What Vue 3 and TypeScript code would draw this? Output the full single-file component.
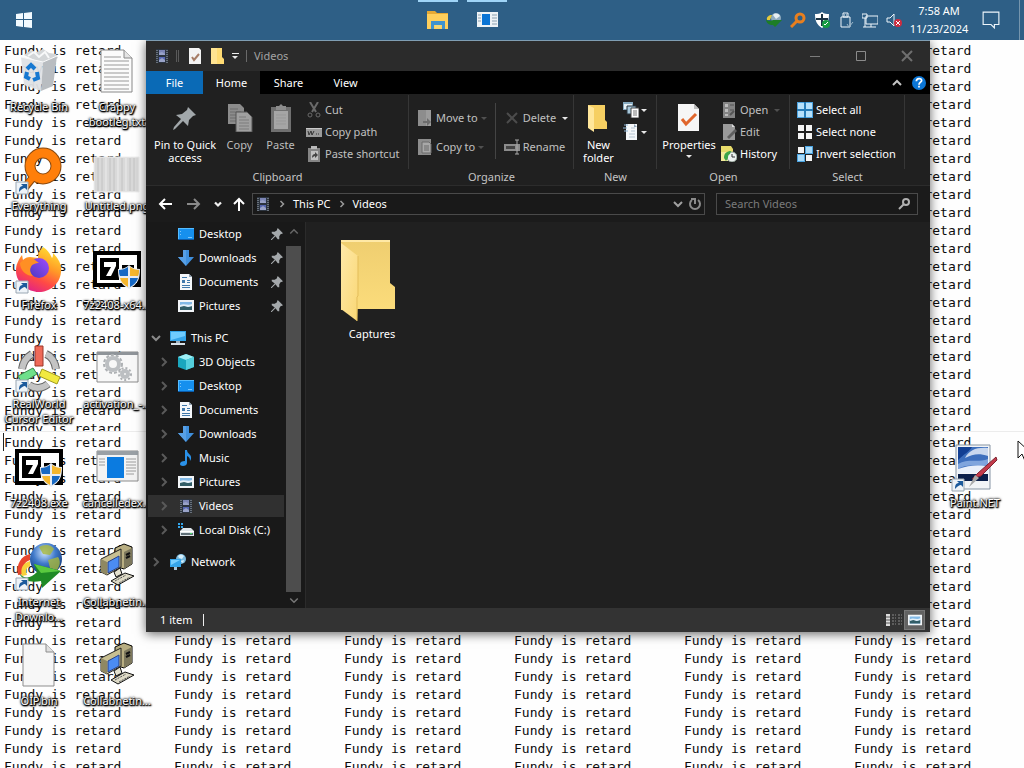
<script setup lang="ts">
interface Shortcut { label: string; icon: string; col: number; row: number }
interface TreeItem { label: string; icon: string; level: number; pinned?: boolean; open?: boolean; selected?: boolean; gap?: boolean }
interface Command { label: string; icon: string; off?: boolean; arrow?: boolean }

const phrase = 'Fundy is retard'
const columns = 6
const tiles = [22, 19]

const arrowBadge = '<path d="M1 35h12v12H1z" fill="#eef3f8" stroke="#9aa7b3"/><path d="M4 45c0-4 1-6 4-6l-2-2h6v6l-2-2c-2 0-3 1-6 4z" fill="#1c5a9c"/>'
const shield = '<path d="M36 19c3 3 7 4 11 4 0 10-2 15-11 20-9-5-11-10-11-20 4 0 8-1 11-4z" fill="#e9edf2"/><path d="M35 21v9h-8c-1-2-1-4-1-6 3 0 6-1 9-3z" fill="#1769c4"/><path d="M37 21c3 2 6 3 9 3 0 2 0 4-1 6h-8z" fill="#f5b62d"/><path d="M27 32h8v9c-4-2-7-5-8-9z" fill="#f5b62d"/><path d="M45 32h-8v9c4-2 7-5 8-9z" fill="#1769c4"/>'
const sevenZip = '<path d="M0 5h48v36H0z" fill="#000"/><path d="M4 9h40v28H4z" fill="#fff"/><path d="M7 12h19v22H7z" fill="#000"/><path d="M11 16h12v4l-5 10h-5l5-9h-7z" fill="#fff"/><path d="M29 19h12v4l-6 7h6v4H29v-4l6-7h-6z" fill="#000"/>'
const oldPc = '<path d="M22 5l9-4 8 3v17l-8 5-9-3z" fill="#b8ae82" stroke="#000"/><path d="M31 9l8-4v16l-8 5z" fill="#7d785d"/><path d="M33 12l4-2m-4 5l4-2" stroke="#111" stroke-width="2"/><path d="M8 16L28 6v18L14 32l-6-3z" fill="#c8bf91" stroke="#222"/><path d="M8 16l6 3v13l-6-3z" fill="#8f8862"/><path d="M15 19l11-6v11l-11 6z" fill="#4b8cf4" stroke="#27408a"/><path d="M21 29l6-4 2 6-6 3z" fill="#e5e1cf" stroke="#111"/><path d="M18 38l14-8 9 3-16 9z" fill="#dedac6" stroke="#111"/><path d="M22 38l11-6m-7 8l11-6" stroke="#555" stroke-dasharray="2 1"/>'

const big: Record<string, string> = {
  recycle: '<path d="M9 7l7-5 4 3 8-4 6 4 7 1 2 4-15 6z" fill="#d3d6d8"/><path d="M13 8l6-4 5 5 6-5 4 6" fill="none" stroke="#f7f8f9" stroke-width="2"/><path d="M6 9l22 5-2 29L9 37z" fill="#dfe2e5" fill-opacity=".95"/><path d="M28 14l14-6-4 30-12 5z" fill="#b9bdc1"/><path d="M6 9l22 5 14-6" fill="none" stroke="#f8f9fa"/><g fill="none" stroke="#1678d1" stroke-width="4"><path d="M12 21l4-4 4 4"/><path d="M22 24l1 6-5 2"/><path d="M15 31l-4-2 1-5"/></g>',
  text: '<path d="M8 2h23l8 8v34H8z" fill="#fbfbfb" stroke="#888"/><path d="M31 2v8h8" fill="#e4e4e4" stroke="#888"/><path d="M11 9h17M11 13h25M11 17h25M11 21h25M11 25h25M11 29h25M11 33h25M11 37h25M11 41h25" stroke="#999"/>',
  everything: '<circle cx="28" cy="19" r="13" fill="none" stroke="#8a4a10" stroke-width="11"/><path d="M20 28L8 43" stroke="#8a4a10" stroke-width="8"/><circle cx="28" cy="19" r="13" fill="none" stroke="#ff7f0a" stroke-width="9"/><path d="M21 27L9 41" stroke="#ff7f0a" stroke-width="6"/>' + arrowBadge,
  thumb: '<path d="M1 10h45v35H1z" fill="#d9d9d9" stroke="#eee"/><path d="M5 11v33M9 11v33M17 11v33M21 11v33M29 11v33M37 11v33M41 11v33" stroke="#c2c2c2"/><path d="M13 11v33M25 11v33M33 11v33" stroke="#ececec"/>',
  firefox: '<defs><linearGradient id="ffx" x1=".8" y1="0" x2=".3" y2="1"><stop offset="0" stop-color="#ffe535"/><stop offset=".4" stop-color="#ff9a26"/><stop offset=".7" stop-color="#ff4a45"/><stop offset="1" stop-color="#e0218a"/></linearGradient><linearGradient id="ffp" x1="1" y1="0" x2="0" y2="1"><stop offset="0" stop-color="#a04bff"/><stop offset="1" stop-color="#4a38c0"/></linearGradient></defs><path d="M28 1c5 3 7 7 9 11 1-1 1-3 1-5 6 6 9 12 8 19-1 12-11 20-22 20S1 37 1 25c0-7 3-12 6-16l1 5c2-2 4-3 7-3 3 0 5 1 8 1 0-5 2-8 5-11z" fill="url(#ffx)"/><circle cx="24" cy="22" r="10" fill="url(#ffp)"/><path d="M5 17c3-4 10-6 15-3l4 3c-3 0-7 1-8 4-2 3 0 7 2 9-7 0-13-6-13-13z" fill="#ff8f24"/>' + arrowBadge,
  seven: sevenZip + shield,
  realworld: '<g fill="none" stroke-width="8" stroke-linecap="butt"><path d="M7 24c1-7 5-12 10-15" stroke="#666"/><path d="M31 9c5 2 9 8 10 15" stroke="#666"/><path d="M14 40c6 4 13 4 19-1" stroke="#666"/><path d="M7 24c1-7 5-12 10-15M31 9c5 2 9 8 10 15M14 40c6 4 13 4 19-1" stroke="#c4c4c4" stroke-width="6"/></g><path d="M20 1h8v20h-8z" fill="#ee6a58" stroke="#9c3628"/><path d="M3 31l15-8 4 6-15 9z" fill="#6fe08a" stroke="#3b8c4e"/><path d="M27 24l18 8-3 7-18-8z" fill="#f1e93f" stroke="#a19b1d"/>' + arrowBadge,
  gears: '<path d="M4 7h41v30H4z" fill="#f8f8f8" stroke="#8b8b8b"/><path d="M4 7h41v3H4z" fill="#8f9499"/><circle cx="20" cy="19" r="6" fill="none" stroke="#bcbfc2" stroke-width="4"/><circle cx="20" cy="19" r="9" fill="none" stroke="#aeb1b4" stroke-width="2" stroke-dasharray="3 2"/><circle cx="32" cy="29" r="3" fill="none" stroke="#bcbfc2" stroke-width="4"/><circle cx="32" cy="29" r="6" fill="none" stroke="#aeb1b4" stroke-width="2" stroke-dasharray="2 2"/>',
  app: '<path d="M4 7h41v30H4z" fill="#f3f3f3" stroke="#8b8b8b"/><path d="M4 7h41v4H4z" fill="#9aa0a5"/><path d="M14 13h17v21H14z" fill="#0b7be0"/><path d="M6 15h6M6 18h6M6 21h6M33 15h10M33 18h10M33 21h10M33 24h10M33 27h10M33 30h8" stroke="#9c9c9c"/>',
  idm: '<defs><radialGradient id="globe" cx=".45" cy=".3" r=".7"><stop offset="0" stop-color="#cfe4ff"/><stop offset=".5" stop-color="#3f79c9"/><stop offset="1" stop-color="#123a7c"/></radialGradient></defs><circle cx="31" cy="16" r="16" fill="url(#globe)"/><path d="M24 4c5-3 12-3 15 2l-4 6-7-1zM33 17l10-3c3 4 2 9-1 13l-7-2z" fill="#a7b83b" fill-opacity=".8"/><path d="M3 32C1 21 6 13 15 11v6c-6 2-8 7-5 14z" fill="#e8462e"/><path d="M7 33c-2-8 1-13 8-15v5c-3 1-5 4-3 9z" fill="#f7d23b"/><path d="M4 30c6 7 12 5 18-1l-3-8 27 7-19 17-1-7C16 40 8 38 4 30z" fill="#1f8a25"/><path d="M19 21l27 7-20 2z" fill="#5ac93f"/>' + arrowBadge,
  pc: oldPc,
  blank: '<path d="M8 2h23l8 8v34H8z" fill="#f7f7f7" stroke="#8d8d8d"/><path d="M31 2v8h8" fill="#e0e0e0" stroke="#8d8d8d"/>',
  paint: '<path d="M5 1h34v44H5z" fill="#f2f4f7" stroke="#8694a3"/><path d="M7 3h30v26H7z" fill="#3d6fbd"/><path d="M7 3h14c-3 5-8 7-14 13z" fill="#123f93"/><path d="M14 14c4-8 12-11 23-10v8c-9-3-15-2-23 2z" fill="#c8d7ee"/><path d="M7 20c10-6 20-1 30-5v6c-10 3-19-3-30 4z" fill="#7fa5dd"/><path d="M7 25c10-4 20-4 30-3v7H7z" fill="#e9f0fa"/><path d="M7 30h30v7H7z" fill="#0b1f4a"/><path d="M45 13l-18 16-6 6 9-3L46 16z" fill="#c23a4a" stroke="#7d2430"/><path d="M24 31l4 3-10 9z" fill="#a9a9a9"/>' + arrowBadge,
}

const film = '<path d="M2 1h12v14H2z" fill="#2c343f"/><path d="M5 2h6v5H5z" fill="#7d86b6"/><path d="M5 9h6v5H5z" fill="#5566b0"/><path d="M5 5l3-1 3 2v1H5zM5 12l3-2 3 2v2H5z" fill="#9aa3c8"/><path d="M3 2v13M13 2v13" stroke="#a5adb6" stroke-dasharray="1 1"/>'
const desktopIcon = '<path d="M0 2h16v12H0z" fill="#1690ee"/><path d="M0 2h16v1H0zM0 2h1v12H0z" fill="#55bcff"/><path d="M2 5h1v1H2zM2 8h1v1H2zM10 11h4v1h-4z" fill="#7cc6fa"/><path d="M0 13h16v1H0z" fill="#0b5cab"/>'

const small: Record<string, string> = {
  film,
  desktop: desktopIcon,
  downloads: '<path d="M5 0h6v7h5l-8 9-8-9h5z" fill="#3f8fdc"/><path d="M5 0h3v16L0 7h5z" fill="#579fe5"/>',
  documents: '<path d="M2 0h9l3 3v13H2z" fill="#f4f7fa"/><path d="M11 0v3h3z" fill="#8fa3b6"/><path d="M4 3h5v1H4zM4 6h3v3H4zM9 6h3v1H9zM9 8h3v1H9zM4 11h8v1H4zM4 13h8v1H4z" fill="#3f78ab"/>',
  pictures: '<path d="M0 2h16v12H0z" fill="#f2f5f8"/><path d="M2 4h12v8H2z" fill="#82b9e6"/><path d="M2 8l4-1 4 2 4-1v4H2z" fill="#315d67"/><path d="M2 7c4-2 8 1 12-1v2l-4 1-4-1-4 1z" fill="#e5f0f8"/>',
  pc: '<path d="M0 1h16v10H0z" fill="#35a5ea"/><path d="M1 2h14v4L1 10z" fill="#70ccff"/><path d="M6 11h4v2H6z" fill="#9fb2c0"/><path d="M1 13h14v2H1z" fill="#d8e1e8"/>',
  cube: '<path d="M8 0l8 3v10l-8 3-8-3V3z" fill="#1aa6bd"/><path d="M8 0l8 3-8 3-8-3z" fill="#9eeff5"/><path d="M8 6l8-3v10l-8 3z" fill="#54cfdd"/>',
  music: '<path d="M7 0h2c0 4 5 4 4 9l-1 2c0-3-1-4-3-5v7c0 2-2 3-4 3s-3-1-3-2c0-2 2-3 5-3z" fill="#2a91e8"/>',
  disk: '<path d="M0 1h2v2H0zM3 1h2v2H3zM0 4h2v2H0zM3 4h2v2H3z" fill="#35a5ea"/><path d="M2 9l3-3h8l3 3v5H2z" fill="#dfe6ea"/><path d="M2 9h14v1H2z" fill="#fff"/><path d="M3 11h12v2H3z" fill="#607078"/><path d="M12 11h2v1h-2z" fill="#49e06b"/>',
  network: '<circle cx="11" cy="5" r="5" fill="#79b9dc"/><path d="M8 2c2-2 4-2 6 0l-2 3-3-1zM10 7l4-1-1 3z" fill="#d5eefb"/><path d="M0 5h11v8H0z" fill="#35a5ea"/><path d="M1 6h9L1 11z" fill="#78cfff"/><path d="M4 13h3v3H4z" fill="#a8c5d6"/>',
  pin: '<path d="M9 0l7 7-2 1-1 0-2 3 0 4-2 0-3-4-5 5-1 0 0-1 5-5-4-3 0-2 4 0 3-2 0-1z" fill="#a4a8ab"/>',
  cut: '<path d="M4 0l6 10M12 0L6 10" stroke="#6a6a6a" stroke-width="2" fill="none"/><circle cx="4" cy="13" r="2" fill="none" stroke="#6a6a6a"/><circle cx="12" cy="13" r="2" fill="none" stroke="#6a6a6a"/>',
  path: '<path d="M0 4h16v9H0z" fill="#9b9b9b"/><path d="M2 7l1 4 2-4 1 4 2-4M10 10h1M12 10h1" stroke="#333" fill="none"/><path d="M0 4h16v1H0z" fill="#cacaca"/>',
  pasteShortcut: '<path d="M2 2h12v14H2z" fill="#858585"/><path d="M5 0h6v3H5z" fill="#b9b9b9"/><path d="M5 5h7v9H5z" fill="#c0c0c0"/><path d="M6 12c0-3 1-4 3-4V6l3 3-3 3v-2c-1 0-2 1-3 2z" fill="#444"/>',
  move: '<path d="M1 0h13v16H1z" fill="#8d8d8d"/><path d="M9 0h5v16H9z" fill="#9c9c9c"/><path d="M6 11h4V8l4 4-4 4v-3H6z" fill="#6c6c6c"/>',
  copyTo: '<path d="M1 0h13v16H1z" fill="#8d8d8d"/><path d="M5 3h7l2 2v9H5z" fill="#a8a8a8" stroke="#6a6a6a"/><path d="M7 7h5M7 9h5M7 11h5" stroke="#6a6a6a"/>',
  delete: '<path d="M3 3l10 10M13 3L3 13" stroke="#4c4c4c" stroke-width="2"/>',
  rename: '<path d="M0 5h16v7H0z" fill="#8c8c8c"/><path d="M2 7h9v3H2z" fill="#444"/><path d="M11 1h4M13 1v14M11 15h4" stroke="#aaa"/>',
  newItem: '<path d="M0 0h10v8H0z" fill="#86a9bf"/><path d="M1 2h8v5H1z" fill="#e6f1f7"/><path d="M4 4h9v8H4z" fill="#a7c7da" stroke="#26333c"/><path d="M8 6h8v10H8z" fill="#fff" stroke="#444"/><path d="M10 9h4M10 11h4M10 13h4" stroke="#777"/>',
  easy: '<path d="M3 0h11v16H3z" fill="#f4f7f9"/><path d="M8 4h4M8 7h4M6 10h6M6 13h6" stroke="#b4c3d0"/><path d="M0 4h4M1 7h4M1 1h4" stroke="#8fb6d6"/><path d="M11 0l3 3h-3z" fill="#8fa3b6"/>',
  open: '<path d="M2 0h12v16H2z" fill="#848484"/><path d="M4 2h3v3H4zM4 7h3v3H4zM4 12h3v2H4z" fill="#bcbcbc"/><path d="M9 3h4M9 8h4" stroke="#555"/><path d="M9 13l4-4" stroke="#555" stroke-width="2"/>',
  edit: '<path d="M2 0h9l3 3v13H2z" fill="#999"/><path d="M11 0v3h3z" fill="#ddd"/><path d="M6 13l8-8 2 2-8 8z" fill="#606060"/>',
  history: '<path d="M0 0h10l2 3v10H0z" fill="#e8dc6b"/><path d="M0 6h7v9H0z" fill="#f3eb9a"/><circle cx="11" cy="11" r="5" fill="#eef2f0" stroke="#8a9a8f"/><path d="M11 8v3h3" stroke="#333" fill="none"/><path d="M3 12c0-5 3-7 7-7l-1 3c-2 1-2 2-2 4l-2 3z" fill="#3da548"/>',
  all: '<path d="M0 0h16v16H0z" fill="#4ba3e0"/><path d="M1 1h6v6H1zM9 1h6v6H9zM1 9h6v6H1zM9 9h6v6H9z" fill="#b5e0fb"/><path d="M7 0h2v16H7zM0 7h16v2H0z" fill="#267bb7"/>',
  none: '<path d="M1 1h6v6H1zM9 1h6v6H9zM1 9h6v6H1zM9 9h6v6H9z" fill="#f5f5f5"/>',
  invert: '<path d="M8 0h8v8H8zM0 8h8v8H0z" fill="#4ba3e0"/><path d="M9 1h6v6H9zM1 9h6v6H1z" fill="#a9dbfa"/><path d="M1 1h6v6H1zM9 9h6v6H9z" fill="#f5f5f5"/>',
  check: '<path d="M2 0h10l2 2v14H2z" fill="#f3f3f3"/><path d="M5 9l2 3 5-6" stroke="#a67c66" stroke-width="2" fill="none"/>',
  folder: '<path d="M2 0h11v9l2 2v5H2z" fill="#ffdb73"/><path d="M2 0h6v16H2z" fill="#ffe391"/>',
  search: '<circle cx="10" cy="6" r="3" fill="none" stroke="#b0b0b0" stroke-width="2"/><path d="M8 8l-5 5" stroke="#b0b0b0" stroke-width="2"/>',
  refresh: '<path d="M5 4a5 5 0 1 0 6 0" fill="none" stroke="#8a8a8a" stroke-width="2"/><path d="M4 3h4v5" fill="none" stroke="#8a8a8a" stroke-width="2"/>',
  back: '<path d="M15 8H3M8 3L3 8l5 5" fill="none" stroke="#fff" stroke-width="2"/>',
  forward: '<path d="M1 8h12M8 3l5 5-5 5" fill="none" stroke="#8a8a8a" stroke-width="2"/>',
  up: '<path d="M8 15V3M3 8l5-5 5 5" fill="none" stroke="#fff" stroke-width="2"/>',
  recent: '<path d="M4 6l4 4 4-4" fill="none" stroke="#f0f0f0" stroke-width="3"/>',
  down: '<path d="M4 6l4 4 4-4" fill="none" stroke="#a0a0a0" stroke-width="2"/>',
  chevUp: '<path d="M4 10l4-4 4 4" fill="none" stroke="#c4c4c4" stroke-width="2"/>',
  right: '<path d="M6 4l4 4-4 4" fill="none" stroke="#999" stroke-width="2"/>',
  min: '<path d="M3 8h10" transform="translate(0 .5)" stroke="#7b7b7b"/>',
  max: '<path d="M3 3h9v9H3z" transform="translate(.5 .5)" fill="none" stroke="#8b8b8b"/>',
  close: '<path d="M3 3l10 10M13 3L3 13" stroke="#6f6f6f" stroke-width="2"/>',
  help: '<circle cx="8" cy="8" r="8" fill="#0b76d6"/><path d="M5 6c0-4 6-4 6-1 0 2-3 2-3 5M8 11v2" stroke="#fff" stroke-width="2" fill="none"/>',
  start: '<path d="M0 2l7-1v6H0zM8 1l8-1v7H8zM0 8h7v7l-7-1zM8 8h8v8l-8-1z" fill="#f2faff"/>',
  idm: '<circle cx="10" cy="6" r="5" fill="#8fabbe"/><path d="M7 3c2-2 5-2 7 1l-4 3z" fill="#e6eef2"/><path d="M1 8c-1-3 2-5 5-5L4 8z" fill="#e4c93c"/><path d="M0 7c2 3 5 2 7 1l9 0-7 7-2-2C3 13 0 11 0 7z" fill="#1d7d26"/>',
  every: '<circle cx="10" cy="6" r="4" fill="none" stroke="#e87f1f" stroke-width="3"/><path d="M7 9l-6 6" stroke="#e87f1f" stroke-width="3"/>',
  defender: '<path d="M8 0c2 2 5 2 7 2 0 7-2 11-7 14C3 13 1 9 1 2c2 0 5 0 7-2z" fill="#fff"/><path d="M8 2v12M2 7h12" stroke="#1c3445" stroke-width="2"/><circle cx="12" cy="12" r="4" fill="#169b43"/><path d="M10 12l1 1 3-3" stroke="#fff" fill="none"/>',
  usb: '<path d="M5 1h5v4H5zM3 5h9v10H3z" fill="none" stroke="#eef6fb"/><path d="M6 3h1M8 3h1" stroke="#eef6fb"/><path d="M9 12l2 3 4-5" stroke="#9eb8c9" fill="none"/>',
  lan: '<path d="M4 4h12v8H4zM0 2h5v4H0zM3 6v9M1 15h13M9 12v3" fill="none" stroke="#eef6fb"/>',
  mute: '<path d="M1 6h3l4-4v12l-4-4H1z" fill="none" stroke="#eef6fb"/><circle cx="12" cy="11" r="4" fill="#cf2d40"/><path d="M10 9l4 4M14 9l-4 4" stroke="#fff"/>',
  note: '<path d="M1 1h14v11h-4v3l-3-3H1z" fill="none" stroke="#eef6fb"/>',
  details: '<path d="M0 2h4v12H0z" fill="#ddd"/><path d="M0 5h4M0 8h4M0 11h4" stroke="#555"/><path d="M6 3h4M12 3h4M6 6h4M12 6h4M6 9h4M12 9h4M6 12h4M12 12h4" stroke="#888" stroke-dasharray="2 1"/>',
}

const shortcuts: Shortcut[] = [
  { label: 'Recycle Bin', icon: 'recycle', col: 1, row: 1 },
  { label: 'Everything', icon: 'everything', col: 1, row: 2 },
  { label: 'Firefox', icon: 'firefox', col: 1, row: 3 },
  { label: 'RealWorld Cursor Editor', icon: 'realworld', col: 1, row: 4 },
  { label: '7z2408.exe', icon: 'seven', col: 1, row: 5 },
  { label: 'Internet Downlo...', icon: 'idm', col: 1, row: 6 },
  { label: 'OIP.bin', icon: 'blank', col: 1, row: 7 },
  { label: 'Crappy bootleg.txt', icon: 'text', col: 2, row: 1 },
  { label: 'Untitled.png', icon: 'thumb', col: 2, row: 2 },
  { label: '7z2408-x64...', icon: 'seven', col: 2, row: 3 },
  { label: 'activation_-...', icon: 'gears', col: 2, row: 4 },
  { label: 'cancelledex...', icon: 'app', col: 2, row: 5 },
  { label: 'Collabnetin...', icon: 'pc', col: 2, row: 6 },
  { label: 'Collabnetin...', icon: 'pc', col: 2, row: 7 },
  { label: 'Paint.NET', icon: 'paint', col: 13, row: 5 },
]

const tree: TreeItem[] = [
  { label: 'Desktop', icon: 'desktop', level: 1, pinned: true },
  { label: 'Downloads', icon: 'downloads', level: 1, pinned: true },
  { label: 'Documents', icon: 'documents', level: 1, pinned: true },
  { label: 'Pictures', icon: 'pictures', level: 1, pinned: true },
  { label: 'This PC', icon: 'pc', level: 0, open: true, gap: true },
  { label: '3D Objects', icon: 'cube', level: 1 },
  { label: 'Desktop', icon: 'desktop', level: 1 },
  { label: 'Documents', icon: 'documents', level: 1 },
  { label: 'Downloads', icon: 'downloads', level: 1 },
  { label: 'Music', icon: 'music', level: 1 },
  { label: 'Pictures', icon: 'pictures', level: 1 },
  { label: 'Videos', icon: 'film', level: 1, selected: true },
  { label: 'Local Disk (C:)', icon: 'disk', level: 1 },
  { label: 'Network', icon: 'network', level: 0, gap: true },
]

const clipboard: Command[] = [
  { label: 'Cut', icon: 'cut', off: true },
  { label: 'Copy path', icon: 'path', off: true },
  { label: 'Paste shortcut', icon: 'pasteShortcut', off: true },
]
const organizeLeft: Command[] = [
  { label: 'Move to', icon: 'move', off: true, arrow: true },
  { label: 'Copy to', icon: 'copyTo', off: true, arrow: true },
]
const organizeRight: Command[] = [
  { label: 'Delete', icon: 'delete', off: true, arrow: true },
  { label: 'Rename', icon: 'rename', off: true },
]
const opening: Command[] = [
  { label: 'Open', icon: 'open', off: true, arrow: true },
  { label: 'Edit', icon: 'edit', off: true },
  { label: 'History', icon: 'history' },
]
const selecting: Command[] = [
  { label: 'Select all', icon: 'all' },
  { label: 'Select none', icon: 'none' },
  { label: 'Invert selection', icon: 'invert' },
]
const tray = ['idm', 'every', 'defender', 'usb', 'lan', 'mute']
</script>

<template>
  <div class="screen">
    <header class="taskbar">
      <button class="start" aria-label="Start"><svg class="i16" viewBox="0 0 16 16" v-html="small.start" /></button>
      <div class="grow-left"></div>
      <div class="tasks">
        <button class="task" aria-label="File Explorer">
          <svg class="i24" viewBox="0 0 24 24">
            <path d="M1 2h8l2 2h11v16H1z" fill="#e6a935" /><path d="M1 5h21v15H1z" fill="#ffcf5c" />
            <path d="M5 12h14v8h-3v-4H8v4H5z" fill="#3f93cf" /><path d="M9 16h6v3H9z" fill="#f3d877" />
          </svg>
        </button>
        <button class="task" aria-label="Application">
          <svg class="i24" viewBox="0 0 24 24">
            <path d="M2 3h21v15H2z" fill="#eef3f6" /><path d="M7 5h8v11H7z" fill="#0a74d4" />
            <path d="M3 6h3M3 9h3M3 12h3M17 6h5M17 9h5M17 12h5M17 15h5" stroke="#8ba0b0" />
          </svg>
        </button>
      </div>
      <div class="grow-right"></div>
      <button v-for="t in tray" :key="t" class="tray" :aria-label="t"><svg class="i16" viewBox="0 0 16 16" v-html="small[t]" /></button>
      <button class="clock"><span>7:58 AM</span><span>11/23/2024</span></button>
      <button class="note" aria-label="Notifications"><svg class="i18" viewBox="0 0 16 16" v-html="small.note" /></button>
      <button class="peek" aria-label="Show desktop"></button>
    </header>

    <main class="desktop">
      <div class="wallpaper" aria-hidden="true">
        <div v-for="(rows, t) in tiles" :key="t" class="tile">
          <template v-for="r in rows" :key="r">
            <span v-for="c in columns" :key="c">{{ phrase }}</span>
          </template>
        </div>
        <i class="caret"></i>
      </div>

      <div class="shortcuts">
        <button v-for="(s, i) in shortcuts" :key="i" class="shortcut" :class="['c' + s.col, 'r' + s.row]">
          <svg class="i48" viewBox="0 0 48 48" v-html="big[s.icon]" />
          <span>{{ s.label }}</span>
        </button>
      </div>

      <section class="window" aria-label="Videos">
        <div class="titlebar">
          <svg class="i16" viewBox="0 0 16 16" v-html="small.film" />
          <i class="bar double"></i>
          <button aria-label="Properties"><svg class="i16" viewBox="0 0 16 16" v-html="small.check" /></button>
          <button aria-label="New folder"><svg class="i16" viewBox="0 0 16 16" v-html="small.folder" /></button>
          <button class="quick" aria-label="Customize"><i class="dash"></i><i class="tri"></i></button>
          <i class="bar"></i>
          <h1>Videos</h1>
          <button class="wbtn" aria-label="Minimize"><svg class="i16" viewBox="0 0 16 16" v-html="small.min" /></button>
          <button class="wbtn" aria-label="Maximize"><svg class="i16" viewBox="0 0 16 16" v-html="small.max" /></button>
          <button class="wbtn" aria-label="Close"><svg class="i16" viewBox="0 0 16 16" v-html="small.close" /></button>
        </div>

        <div class="tabs">
          <button class="file">File</button>
          <button class="active">Home</button>
          <button>Share</button>
          <button>View</button>
          <button class="fold" aria-label="Collapse ribbon"><svg class="i16" viewBox="0 0 16 16" v-html="small.chevUp" /></button>
          <button class="help" aria-label="Help"><svg class="i14" viewBox="0 0 16 16" v-html="small.help" /></button>
        </div>

        <div class="ribbon">
          <div class="group clip">
            <div class="body">
              <button class="large pinbtn">
                <svg class="i28" viewBox="0 0 28 28"><path d="M17 3l8 8-3 1-4 4-1 6-5-5-8 8-2 1 1-3 7-8-5-4 6-1 5-4z" fill="#a2a8ab" /></svg>
                <span>Pin to Quick<br>access</span>
              </button>
              <button class="large copybtn off">
                <svg class="i28" viewBox="0 0 28 28"><path d="M2 0h12l4 4v16H2z" fill="#8c8c8c" /><path d="M4 5h8M4 8h11M4 11h6M4 14h6M4 17h6" stroke="#6d6d6d" /><path d="M10 8h11l5 5v15H10z" fill="#a0a0a0" stroke="#555" /><path d="M13 13h7M13 16h10M13 19h10M13 22h10M13 25h10" stroke="#7d7d7d" /></svg>
                <span>Copy</span>
              </button>
              <button class="large pastebtn off">
                <svg class="i28" viewBox="0 0 28 28"><path d="M4 3h20v25H4z" fill="#707070" /><path d="M7 7h14v18H7z" fill="#a6a6a6" /><path d="M9 2h3l2-2 2 2h3v4H9z" fill="#8c8c8c" /><path d="M9 11h10M9 14h10M9 17h10M9 20h10" stroke="#999" /></svg>
                <span>Paste</span>
              </button>
              <div class="list">
                <button v-for="c in clipboard" :key="c.label" class="cmd" :class="{ off: c.off }">
                  <svg class="i16" viewBox="0 0 16 16" v-html="small[c.icon]" />{{ c.label }}
                </button>
              </div>
            </div>
            <h2>Clipboard</h2>
          </div>

          <div class="group org">
            <div class="body">
              <div class="list two">
                <button v-for="c in organizeLeft" :key="c.label" class="cmd" :class="{ off: c.off }">
                  <svg class="i16" viewBox="0 0 16 16" v-html="small[c.icon]" />{{ c.label }}<i class="tri dim"></i>
                </button>
              </div>
              <i class="split"></i>
              <div class="list two">
                <button v-for="c in organizeRight" :key="c.label" class="cmd" :class="{ off: c.off }">
                  <svg class="i16" viewBox="0 0 16 16" v-html="small[c.icon]" />{{ c.label }}<i v-if="c.arrow" class="tri"></i>
                </button>
              </div>
            </div>
            <h2>Organize</h2>
          </div>

          <div class="group new">
            <div class="body">
              <button class="large newbtn">
                <svg class="i28" viewBox="0 0 28 28"><path d="M3 1h17v15l2 2v7H9z" fill="#f6cf62" /><path d="M3 1l6 3v24l-6-4z" fill="#ffe69a" /></svg>
                <span>New<br>folder</span>
              </button>
              <div class="list minis">
                <button class="cmd" aria-label="New item"><svg class="i16" viewBox="0 0 16 16" v-html="small.newItem" /><i class="tri"></i></button>
                <button class="cmd" aria-label="Easy access"><svg class="i16" viewBox="0 0 16 16" v-html="small.easy" /><i class="tri"></i></button>
              </div>
            </div>
            <h2>New</h2>
          </div>

          <div class="group opn">
            <div class="body">
              <button class="large propbtn">
                <svg class="i28" viewBox="0 0 28 28"><path d="M3 0h16l5 5v22H3z" fill="#f6f6f6" /><path d="M19 0v5h5z" fill="#bdbdbd" /><path d="M7 15l4 5 10-10" fill="none" stroke="#e0662c" stroke-width="3" /></svg>
                <span>Properties</span><i class="tri"></i>
              </button>
              <div class="list">
                <button v-for="c in opening" :key="c.label" class="cmd" :class="{ off: c.off }">
                  <svg class="i16" viewBox="0 0 16 16" v-html="small[c.icon]" />{{ c.label }}<i v-if="c.arrow" class="tri dim"></i>
                </button>
              </div>
            </div>
            <h2>Open</h2>
          </div>

          <div class="group sel">
            <div class="body">
              <div class="list">
                <button v-for="c in selecting" :key="c.label" class="cmd">
                  <svg class="i16" viewBox="0 0 16 16" v-html="small[c.icon]" />{{ c.label }}
                </button>
              </div>
            </div>
            <h2>Select</h2>
          </div>
        </div>

        <div class="navbar">
          <button aria-label="Back"><svg class="i16" viewBox="0 0 16 16" v-html="small.back" /></button>
          <button class="fwd" aria-label="Forward"><svg class="i16" viewBox="0 0 16 16" v-html="small.forward" /></button>
          <button class="recent" aria-label="Recent locations"><svg class="i12" viewBox="0 0 16 16" v-html="small.recent" /></button>
          <button class="upbtn" aria-label="Up"><svg class="i16" viewBox="0 0 16 16" v-html="small.up" /></button>
          <div class="address">
            <svg class="i16" viewBox="0 0 16 16" v-html="small.film" />
            <svg class="i12" viewBox="0 0 16 16" v-html="small.right" />
            <button>This PC</button>
            <svg class="i12" viewBox="0 0 16 16" v-html="small.right" />
            <button>Videos</button>
            <button class="prev" aria-label="Previous locations"><svg class="i16" viewBox="0 0 16 16" v-html="small.down" /></button>
            <button class="refresh" aria-label="Refresh"><svg class="i16" viewBox="0 0 16 16" v-html="small.refresh" /></button>
          </div>
          <label class="search">
            <input type="text" placeholder="Search Videos" aria-label="Search Videos">
            <svg class="i16" viewBox="0 0 16 16" v-html="small.search" />
          </label>
        </div>

        <div class="content">
          <nav class="tree" aria-label="Folders">
            <button v-for="(n, i) in tree" :key="i" :class="['l' + n.level, { gap: n.gap, selected: n.selected }]">
              <svg class="i16 twist" :class="{ hidden: n.pinned }" viewBox="0 0 16 16">
                <path v-if="n.open" d="M4 6l4 4 4-4" fill="none" stroke="#8a8a8a" stroke-width="2" />
                <path v-else d="M6 4l4 4-4 4" fill="none" stroke="#5a5a5a" stroke-width="2" />
              </svg>
              <svg class="i16" viewBox="0 0 16 16" v-html="small[n.icon]" />
              <span>{{ n.label }}</span>
              <svg v-if="n.pinned" class="i12 pin" viewBox="0 0 16 16" v-html="small.pin" />
            </button>
          </nav>
          <div class="scroll">
            <svg class="i12" viewBox="0 0 16 16"><path d="M3 10l5-5 5 5" fill="none" stroke="#666" stroke-width="2" /></svg>
            <div class="thumb"></div>
            <svg class="i12" viewBox="0 0 16 16"><path d="M3 6l5 5 5-5" fill="none" stroke="#777" stroke-width="2" /></svg>
          </div>
          <div class="files">
            <button class="item">
              <svg viewBox="0 0 104 84">
                <defs>
                  <linearGradient id="fback" x1="0" y1="0" x2="0" y2="1"><stop offset="0" stop-color="#efce70" /><stop offset="1" stop-color="#fbdc7b" /></linearGradient>
                  <linearGradient id="ffront" x1="0" y1="0" x2="1" y2="1"><stop offset="0" stop-color="#ffe9a8" /><stop offset="1" stop-color="#f9d775" /></linearGradient>
                </defs>
                <path d="M21 1h49v43l5 4v22H38l-17 1z" fill="url(#fback)" />
                <path d="M21 1h49v2H21z" fill="#ffe9a6" />
                <path d="M21 4l17 13v40l-1 25-16-12z" fill="url(#ffront)" />
                <path d="M38 17v40l-1 1v24" fill="none" stroke="#e3bd5b" />
              </svg>
              <span>Captures</span>
            </button>
          </div>
        </div>

        <footer class="status">
          <span>1 item</span><i class="split"></i>
          <button class="view" aria-label="Details view"><svg class="i16" viewBox="0 0 16 16" v-html="small.details" /></button>
          <button class="view on" aria-label="Large icons view"><svg class="i14" viewBox="0 0 16 16" v-html="small.pictures" /></button>
        </footer>
      </section>

      <svg class="cursor" viewBox="0 0 14 22"><path d="M1 1v17l4-4 3 7 3-1-3-7h6z" fill="#fff" stroke="#111" /></svg>
    </main>
  </div>
</template>

<style>
body { overflow: hidden; }
</style>

<style scoped>
* { box-sizing: border-box; }
.screen { height: 100vh; display: flex; flex-direction: column; overflow: hidden; font: 11px/16px "Noto Sans", "Open Sans", sans-serif; color: #fff; }
button { margin: 0; padding: 0; border: 0; background: none; color: inherit; font: inherit; }
svg { display: block; flex: none; }
h1, h2 { margin: 0; font-weight: 400; font-size: 11px; }
.i12 { width: 12px; height: 12px; }
.i14 { width: 14px; height: 14px; }
.i16 { width: 16px; height: 16px; }
.i18 { width: 18px; height: 18px; }
.i24 { width: 24px; height: 24px; }
.i28 { width: 28px; height: 28px; }
.i48 { width: 48px; height: 48px; }
.tri { flex: none; border: 3px solid transparent; border-top-color: #e8e8e8; border-bottom-width: 0; }
.tri.dim { border-top-color: #505050; }

.taskbar { flex: none; height: 40px; display: flex; align-items: stretch; background: #2e5f86; }
.taskbar button { display: flex; align-items: center; justify-content: center; }
.start { width: 48px; }
.grow-left { flex: 370 1 0; }
.grow-right { flex: 255 1 0; }
.tasks { display: flex; gap: 9px; }
.taskbar .task { width: 40px; border-top: 2px solid #9fd4f7; }
.tray { width: 24px; }
.taskbar .clock { width: 66px; flex-direction: column; line-height: 18px; }
.note { width: 38px; }
.taskbar .peek { width: 5px; margin-left: 9px; border-left: 1px solid #7595ad; }

.desktop { flex: 1; position: relative; overflow: hidden; background: #fefefe; }
.wallpaper { position: absolute; inset: 0; overflow: hidden; color: #0c0c0c; font: 13px/18px "DejaVu Sans Mono", monospace; }
.tile { display: grid; grid-template-columns: repeat(6, 170px); grid-auto-rows: 18px; padding: 2px 0 0 4px; white-space: nowrap; }
.tile:first-child { height: 392px; overflow: hidden; border-bottom: 1px solid #ececec; }
.caret { position: absolute; left: 3px; top: 393px; width: 1px; height: 18px; background: #222; }

.shortcuts { position: absolute; inset: 0; display: grid; grid-template-columns: repeat(13, 78px); grid-template-rows: repeat(7, 99px); padding-top: 8px; }
.shortcut { display: flex; flex-direction: column; align-items: center; gap: 3px; line-height: 15px; text-align: center; }
.shortcut span { width: 76px; text-shadow: 0 1px 1px #000, 1px 1px 1px #000, 1px 1px 2px #000, 0 0 2px #000, 0 0 3px #000; }
.c1 { grid-column: 1; }
.c2 { grid-column: 2; }
.c13 { grid-column: 13; }
.r1 { grid-row: 1; }
.r2 { grid-row: 2; }
.r3 { grid-row: 3; }
.r4 { grid-row: 4; }
.r5 { grid-row: 5; }
.r6 { grid-row: 6; }
.r7 { grid-row: 7; }

.window { position: absolute; inset: 0 94px 136px 146px; display: flex; flex-direction: column; background: #202020; border-top: 1px solid #7f9db2; box-shadow: 0 2px 10px rgba(0, 0, 0, .6); }
.titlebar { flex: none; height: 30px; display: flex; align-items: center; background: #2b2b2b; padding-left: 8px; color: #a3a3a3; }
.titlebar .bar { width: 1px; height: 12px; margin: 0 7px; background: #6a6a6a; }
.titlebar .double { width: 3px; margin: 0 6px; background: none; border: solid #5a5a5a; border-width: 0 1px; }
.titlebar > button { margin-left: 2px; }
.titlebar > button + button { margin-left: 6px; }
.quick { display: flex; flex-direction: column; align-items: center; gap: 2px; width: 8px; }
.dash { width: 7px; height: 1px; background: #eee; }
.titlebar h1 { flex: 1; line-height: 16px; }
.titlebar > button.wbtn { width: 46px; margin: 0; display: flex; justify-content: center; }

.tabs { flex: none; height: 23px; display: flex; align-items: stretch; background: #000; }
.tabs button { width: 57px; display: flex; align-items: center; justify-content: center; }
.tabs .file { background: #0a6ab6; }
.tabs .active { background: #202020; }
.tabs .fold { width: 22px; margin-left: auto; }
.tabs .help { width: 22px; }

.ribbon { flex: none; height: 92px; display: flex; border-bottom: 1px solid #2c2c2c; }
.group { display: flex; flex-direction: column; }
.body { flex: none; height: 74px; margin-top: 1px; display: flex; align-items: flex-start; border-right: 1px solid #363636; }
.group h2 { text-align: center; color: #c4c4c4; line-height: 16px; }
.clip { width: 263px; }
.org { width: 165px; }
.new { width: 83px; }
.opn { width: 133px; }
.sel { width: 115px; }
.large { display: flex; flex-direction: column; align-items: center; padding-top: 9px; line-height: 13px; white-space: nowrap; }
.large span { margin-top: 6px; }
.large .tri { margin-top: 4px; }
.off { color: #bdbdbd; }
.pinbtn { width: 78px; }
.copybtn { width: 31px; }
.pastebtn { width: 51px; }
.list { display: flex; flex-direction: column; padding-top: 4px; }
.cmd { display: flex; align-items: center; height: 22px; gap: 3px; white-space: nowrap; }
.cmd .tri { margin-left: 3px; }
.cmd.off { color: #c0c0c0; }
.two { padding: 12px 0 0 8px; gap: 7px; }
.two .tri.dim { margin-left: 0; }
.org .split { width: 1px; height: 56px; margin: 8px 0 0 8px; background: #444; }
.newbtn { width: 49px; }
.new .cmd { gap: 0; }
.new .tri { margin-left: 2px; }
.propbtn { width: 64px; }
.sel .list { padding-left: 7px; }

.navbar { flex: none; height: 36px; display: flex; align-items: center; padding: 0 12px 0 11px; background: #1b1b1b; }
.navbar > button { margin-right: 13px; }
.navbar > button.fwd { margin-right: 10px; }
.navbar > button.recent { margin-right: 7px; }
.navbar > button.upbtn { margin-right: 5px; }
.address { flex: 1; height: 22px; display: flex; align-items: center; gap: 5px; padding: 0 1px 0 2px; border: 1px solid #4a4a4a; background: #191919; }
.prev { margin-left: auto; }
.refresh { margin-left: -4px; }
.search { width: 202px; height: 22px; margin-left: 11px; padding: 0 5px 0 8px; display: flex; align-items: center; border: 1px solid #4a4a4a; background: #191919; }
.search input { flex: 1; min-width: 0; padding: 0; border: 0; outline: 0; background: none; color: #ddd; font: inherit; }
.search input::placeholder { color: #7b7b7b; opacity: 1; }

.content { flex: 1; min-height: 0; display: flex; }
.tree { width: 138px; display: flex; flex-direction: column; background: #191919; overflow: hidden; }
.tree button { flex: none; height: 24px; display: flex; align-items: center; padding-left: 2px; white-space: nowrap; }
.tree .l1 { padding-left: 10px; }
.tree .gap { margin-top: 8px; }
.tree .selected { height: 22px; margin: 1px 0 1px 2px; padding-left: 8px; background: #303030; }
.twist { margin-right: 6px; }
.hidden { visibility: hidden; }
.tree span { margin-left: 5px; flex: 1; text-align: left; }
.pin { margin-right: 1px; }
.scroll { width: 22px; padding: 4px 4px 2px 2px; display: flex; flex-direction: column; align-items: center; gap: 8px; background: #191919; border-right: 1px solid #2b2b2b; }
.thumb { flex: 1; width: 15px; margin-bottom: -6px; background: #4d4d4d; }
.files { flex: 1; padding: 17px 14px; }
.item { width: 104px; display: flex; flex-direction: column; align-items: center; }
.item svg { width: 104px; height: 84px; }
.item span { margin-top: 3px; }

.status { flex: none; height: 24px; display: flex; align-items: center; padding: 0 5px 0 14px; background: #333; }
.status .split { width: 1px; height: 12px; margin: 0 auto 0 11px; background: #eee; }
.view { width: 21px; height: 20px; display: flex; align-items: center; justify-content: center; }
.view.on { background: #626262; border: 1px solid #777; }
.cursor { position: absolute; left: 1017px; top: 400px; width: 14px; height: 22px; }
</style>
